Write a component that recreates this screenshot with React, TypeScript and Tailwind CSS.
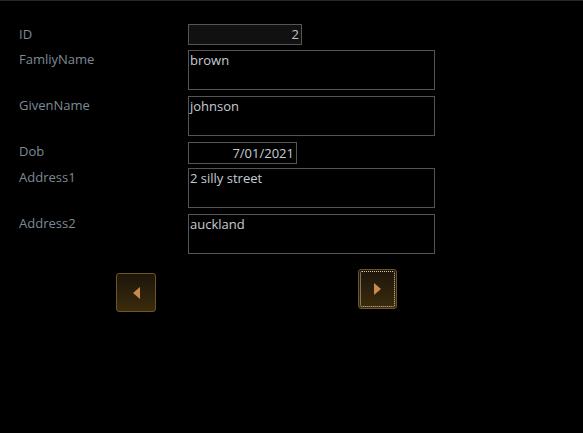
const font = { fontFamily: '"Segoe UI", "Open Sans", "Noto Sans", sans-serif' };

type Field = { label: string; value: string; kind: "id" | "text" | "date" };

const fields: Field[] = [
  { label: "ID", value: "2", kind: "id" },
  { label: "FamliyName", value: "brown", kind: "text" },
  { label: "GivenName", value: "johnson", kind: "text" },
  { label: "Dob", value: "7/01/2021", kind: "date" },
  { label: "Address1", value: "2 silly street", kind: "text" },
  { label: "Address2", value: "auckland", kind: "text" },
];

function Box({ f }: { f: Field }) {
  if (f.kind === "id")
    return (
      <div className="w-[114px] h-[21px] border border-[#555] bg-[#111] text-right pr-[2px] leading-[19px] text-[#b9c2cc]">
        {f.value}
      </div>
    );
  if (f.kind === "date")
    return (
      <div className="w-[109px] h-[22px] border border-[#555] bg-black text-right pr-[2px] leading-[20px] text-[#c6ccd4]">
        {f.value}
      </div>
    );
  return (
    <div className="w-[247px] h-[40px] border border-[#555] bg-black pl-[1px] leading-[18px] text-[#c6ccd4]">
      {f.value}
    </div>
  );
}

export default function App() {
  return (
    <div className="w-[583px] h-[433px] bg-black border-t border-[#2a2620] text-[13px] overflow-hidden" style={font}>
      <div className="pt-[23px] pl-[19px] flex flex-col gap-[5px]">
        {fields.map((f, i) => (
          <div key={f.label} className={"flex " + (i === 2 || i === 3 || i === 5 ? "mt-[1px]" : i === 4 ? "-mt-[1px]" : "")}>
            <div className={"w-[169px] text-[#7d8a96] " + (f.kind === "id" ? "leading-[20px]" : "leading-[18px]")}>{f.label}</div>
            <Box f={f} />
          </div>
        ))}
      </div>
      <div className="flex items-start pl-[116px] mt-[18px]">
        <button className="mt-[1px] w-[40px] h-[39px] rounded-[3px] border border-[#6e5526] bg-gradient-to-b from-[#1c150a] to-[#3c2c0c] flex items-center justify-center">
          <svg width="7" height="12" viewBox="0 0 7 12"><path d="M7 0 L0 6 L7 12 Z" fill="#c98a4e" /></svg>
        </button>
        <button className="ml-[202px] -mt-[3px] w-[39px] h-[40px] rounded-[3px] border border-[#6e5526] bg-gradient-to-b from-[#1c150a] to-[#3c2c0c] p-[1px]">
          <div className="w-full h-full border border-dotted border-[#d8c9a8] rounded-[2px] flex items-center justify-center">
            <svg width="7" height="12" viewBox="0 0 7 12"><path d="M0 0 L7 6 L0 12 Z" fill="#c98a4e" /></svg>
          </div>
        </button>
      </div>
    </div>
  );
}
